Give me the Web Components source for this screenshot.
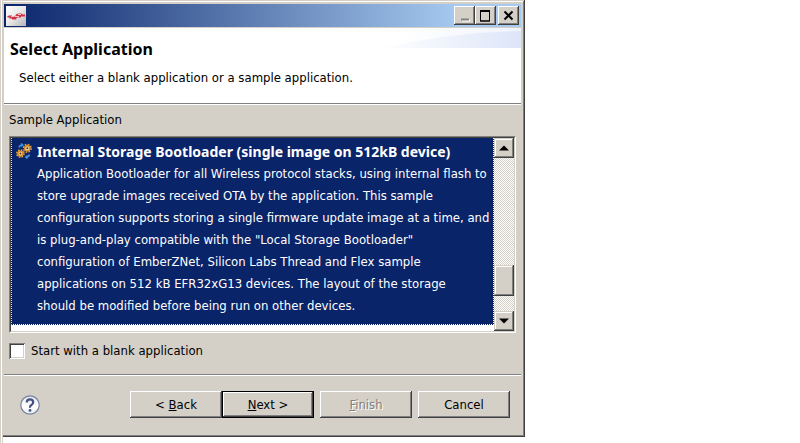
<!DOCTYPE html>
<html lang="en">
<head>
<meta charset="utf-8">
<title>Select Application</title>
<style>
html, body { margin: 0; background: #fff; }
body {
  --face: #d4d0c8; --shadow: #808080; --dark: #404040; --select: #0a246a;
  font: 13px/22px "DejaVu Sans Condensed", "DejaVu Sans", "Noto Sans", sans-serif;
  color: #000;
}
</style>
</head>
<body>
<script>
const define = (name, html) => {
  const template = document.createElement('template');
  template.innerHTML = html;
  customElements.define(name, class extends HTMLElement {
    constructor() {
      super();
      this.attachShadow({ mode: 'open' }).append(template.content.cloneNode(true));
    }
    connectedCallback() {
      const button = this.shadowRoot.querySelector('button');
      if (!button) return;
      if (this.hasAttribute('disabled')) button.disabled = true;
      if (this.hasAttribute('label')) button.setAttribute('aria-label', this.getAttribute('label'));
    }
  });
};

define('push-button', `
<style>
:host { display: block; flex: 0 1 92px; min-width: 0; }
button {
  box-sizing: border-box; display: block; width: 100%; height: 27px; padding: 0; border: 0;
  font: inherit; line-height: 27px; color: #000; background: var(--face);
  box-shadow: inset -1px -1px var(--dark), inset 1px 1px #fff, inset -2px -2px var(--shadow);
}
:host([default]) button {
  box-shadow: inset 0 0 0 1px #000, inset -2px -2px var(--dark), inset 2px 2px #fff, inset -3px -3px var(--shadow);
}
button:disabled { color: #808080; text-shadow: 1px 1px #fff; }
</style>
<button type="button"><slot></slot></button>`);

define('caption-button', `
<style>
:host { display: block; flex: none; }
button {
  display: grid; place-items: center; width: 21px; height: 19px; padding: 0; border: 0;
  background: var(--face); color: #000;
  box-shadow: inset -1px -1px var(--dark), inset 1px 1px #fff, inset -2px -2px var(--shadow);
}
</style>
<button type="button"><slot></slot></button>`);

define('title-bar', `
<style>
:host {
  display: flex; align-items: center; height: 23px; padding: 0 2px;
  background: linear-gradient(90deg, #0a246a, #a6caf0 88%);
}
.logo { display: block; }
.buttons { display: flex; margin-left: auto; }
.close { margin-left: 2px; }
</style>
<svg class="logo" width="20" height="20" viewBox="0 0 20 20" role="img" aria-label="Application">
  <defs><linearGradient id="g" x1="0" y1="0" x2="1" y2="1"><stop offset="0" stop-color="#fff"/><stop offset=".5" stop-color="#e8e8e8"/><stop offset="1" stop-color="#b4b4b8"/></linearGradient></defs>
  <rect width="20" height="20" fill="url(#g)"/>
  <path d="M1 10.500l2-1h3v1h3l1-2 2-1h3l2 1h2v2h-4v1h-4l-1 2H6v-1H3l1-1H2z" fill="#cf3347"/>
  <path d="M5 10.500h3M9 10.500h4M12 8.500h3" stroke="#f2c4c9" stroke-width="1"/>
</svg>
<div class="buttons">
  <caption-button label="Minimize"><svg width="15" height="13"><path d="M5 11.500h8" stroke="#fff" stroke-width="2"/><path d="M4 10.500h8" stroke="#808080" stroke-width="2"/></svg></caption-button>
  <caption-button label="Maximize"><svg width="15" height="13"><path d="M2.500 1v11h9V1M2 12h10" fill="none" stroke="#000"/><path d="M2 2h10" stroke="#000" stroke-width="2"/></svg></caption-button>
  <caption-button class="close" label="Close"><svg width="13" height="13"><path d="M2.500 2.500l8 8M10.500 2.500l-8 8" stroke="#000" stroke-width="2"/></svg></caption-button>
</div>`);

define('page-header', `
<style>
:host {
  display: block; position: relative; box-sizing: border-box; min-height: 76px; margin-top: 1px;
  padding: 10px 6px 0; background: #fff; border-bottom: 1px solid var(--shadow); box-shadow: 0 1px #fff;
}
.wave { position: absolute; top: 0; right: 0; }
h1 { position: relative; margin: 0; font: bold 16px/22px "Noto Sans", sans-serif; }
p { position: relative; margin: 7px 0 0 9px; }
</style>
<svg class="wave" width="140" height="20" viewBox="0 0 140 20" aria-hidden="true">
  <defs><linearGradient id="w"><stop offset="0" stop-color="#fff"/><stop offset="1" stop-color="#dde5f8"/></linearGradient>
  <linearGradient id="v"><stop offset="0" stop-color="#fff"/><stop offset="1" stop-color="#eff3fc"/></linearGradient></defs>
  <path d="M20 0H140V6Q80 3 20 15z" fill="url(#v)"/>
  <path d="M0 20Q70 4 140 3V20z" fill="url(#w)"/>
</svg>
<h1><slot name="title"></slot></h1>
<p><slot></slot></p>`);

define('scroll-bar', `
<style>
:host {
  display: flex; flex-direction: column; flex: none; width: 20px;
  background: repeating-conic-gradient(#fff 0 25%, var(--face) 0 50%) 0 0 / 2px 2px;
}
button, .thumb {
  flex: none; box-sizing: border-box; width: 20px; height: 20px; padding: 0; border: 0; background: var(--face);
  box-shadow: inset -1px -1px var(--dark), inset 1px 1px var(--face), inset -2px -2px var(--shadow), inset 2px 2px #fff;
}
button { display: grid; place-items: center; }
.thumb { height: 31px; }
.above { flex: 107; }
.below { flex: 15; }
</style>
<button type="button" aria-label="Scroll up"><svg width="10" height="6"><path d="M0 5.500L5 .5l5 5z"/></svg></button>
<div class="above"></div><div class="thumb"></div><div class="below"></div>
<button type="button" aria-label="Scroll down"><svg width="10" height="6"><path d="M0 .5l5 5 5-5z"/></svg></button>`);

define('sample-item', `
<style>
:host {
  display: flex; box-sizing: border-box; gap: 5px; padding: 3px 0 7px 4px; overflow: hidden;
  background: var(--select); color: #fff; border: 1px dotted #f5db95; border-top: 0; white-space: nowrap;
  border-right-color: #fff; border-bottom-color: #fff;
}
svg { flex: none; margin-top: 2px; }
.text { flex: 1; min-width: 0; }
h2 { margin: 0; font: bold 14px/22px "Noto Sans", sans-serif; }
p { margin: 0; }
</style>
<svg width="16" height="16" viewBox="0 0 16 16" aria-hidden="true">
  <g fill="none" stroke="#3f8fdc" stroke-width="1.500"><path d="M3 4.500Q3.500 2 6.500 2M5 .5L6.800 2 5 3.500M13.500 11.500Q13 14 10 14M11.500 12.500L9.700 14l1.800 1.500"/></g>
  <g fill="none" stroke="#e9a43f" stroke-width="1.600"><circle cx="11.300" cy="5.300" r="3.800" stroke-dasharray="1.600 1.380"/><circle cx="4.400" cy="10.600" r="3.600" stroke-dasharray="1.500 1.330"/></g>
  <g fill="#fbe3ae" stroke="#d98e2b" stroke-width="1.400"><circle cx="11.300" cy="5.300" r="2.600"/><circle cx="4.400" cy="10.600" r="2.500"/></g>
  <g fill="#4a3115"><circle cx="11.300" cy="5.300" r="1"/><circle cx="4.400" cy="10.600" r="1"/></g>
</svg>
<div class="text"><h2><slot name="title"></slot></h2><p><slot></slot></p></div>`);

define('sample-list', `
<style>
:host {
  display: flex; box-sizing: border-box; min-height: 197px; background: #fff;
  border: 1px solid #fff; border-top-color: var(--shadow); border-left-color: var(--shadow);
}
.well {
  display: flex; flex: 1; min-width: 0;
  border: 1px solid var(--face); border-top-color: var(--dark); border-left-color: var(--dark);
}
.view { flex: 1; min-width: 0; overflow: hidden; }
</style>
<div class="well"><div class="view"><slot></slot></div><scroll-bar></scroll-bar></div>`);

define('check-box', `
<style>
:host { display: block; }
label { display: flex; align-items: center; gap: 6px; }
input {
  appearance: none; flex: none; width: 16px; height: 16px; margin: 0; background: #fff;
  box-shadow: inset 1px 1px var(--shadow), inset -1px -1px #fff, inset 2px 2px var(--dark), inset -2px -2px var(--face);
}
input:checked { background: #000; }
</style>
<label><input type="checkbox"><span><slot></slot></span></label>`);

define('help-button', `
<style>
:host { display: block; flex: none; }
button { display: block; width: 20px; height: 20px; padding: 0; border: 0; background: none; }
svg { display: block; }
</style>
<button type="button" aria-label="Help"><svg width="20" height="20" viewBox="0 0 20 20">
<defs><linearGradient id="h" x1="0" y1="0" x2="0" y2="1"><stop offset="0" stop-color="#e4e7f0"/><stop offset=".6" stop-color="#fff"/><stop offset="1" stop-color="#e4e7f0"/></linearGradient></defs>
<circle cx="10" cy="10" r="9.200" fill="url(#h)" stroke="#76829f" stroke-width="1.200"/>
<path d="M6.800 7.600Q6.800 4.400 10 4.400T13.200 7.200Q13.200 9 11.400 10T10 12.700" fill="none" stroke="#44527f" stroke-width="2.200"/>
<circle cx="10" cy="15.400" r="1.400" fill="#44527f"/></svg></button>`);

define('wizard-window', `
<style>
:host { display: block; min-height: 100vh; padding-left: 3px; background: linear-gradient(90deg, var(--face) 1px, #fff 1px 2px, var(--face) 2px 3px, transparent 3px); }
.frame {
  box-sizing: border-box; max-width: 522px; padding: 4px 4px 19px 1px; background: var(--face);
  box-shadow: inset -1px -1px var(--dark), inset 0 1px var(--face), inset -2px -2px var(--shadow), inset 0 2px #fff;
}
main { padding: 5px 5px 0; }
.label { display: block; margin-bottom: 5px; }
check-box { margin: 7px 0 12px; }
footer {
  display: flex; align-items: center; padding: 16px 11px 0 16px;
  border-top: 1px solid var(--shadow); box-shadow: inset 0 1px #fff;
}
.actions { display: flex; flex: 1; min-width: 0; justify-content: flex-end; gap: 6px; }
.pair { display: flex; flex: 0 1 184px; min-width: 0; }
</style>
<div class="frame">
  <title-bar></title-bar>
  <page-header><span slot="title">Select Application</span>Select either a blank application or a sample application.</page-header>
  <main>
    <span class="label" id="samples">Sample Application</span>
    <sample-list role="listbox" aria-labelledby="samples">
      <sample-item role="option" aria-selected="true">
        <span slot="title">Internal Storage Bootloader (single image on 512kB device)</span>
        Application Bootloader for all Wireless protocol stacks, using internal flash to<br>
        store upgrade images received OTA by the application. This sample<br>
        configuration supports storing a single firmware update image at a time, and<br>
        is plug-and-play compatible with the "Local Storage Bootloader"<br>
        configuration of EmberZNet, Silicon Labs Thread and Flex sample<br>
        applications on 512 kB EFR32xG13 devices. The layout of the storage<br>
        should be modified before being run on other devices.
      </sample-item>
    </sample-list>
    <check-box>Start with a blank application</check-box>
  </main>
  <footer>
    <help-button></help-button>
    <div class="actions">
      <div class="pair"><push-button>&lt; <u>B</u>ack</push-button><push-button default><u>N</u>ext &gt;</push-button></div>
      <push-button disabled><u>F</u>inish</push-button>
      <push-button>Cancel</push-button>
    </div>
  </footer>
</div>`);
</script>
<wizard-window></wizard-window>
</body>
</html>
